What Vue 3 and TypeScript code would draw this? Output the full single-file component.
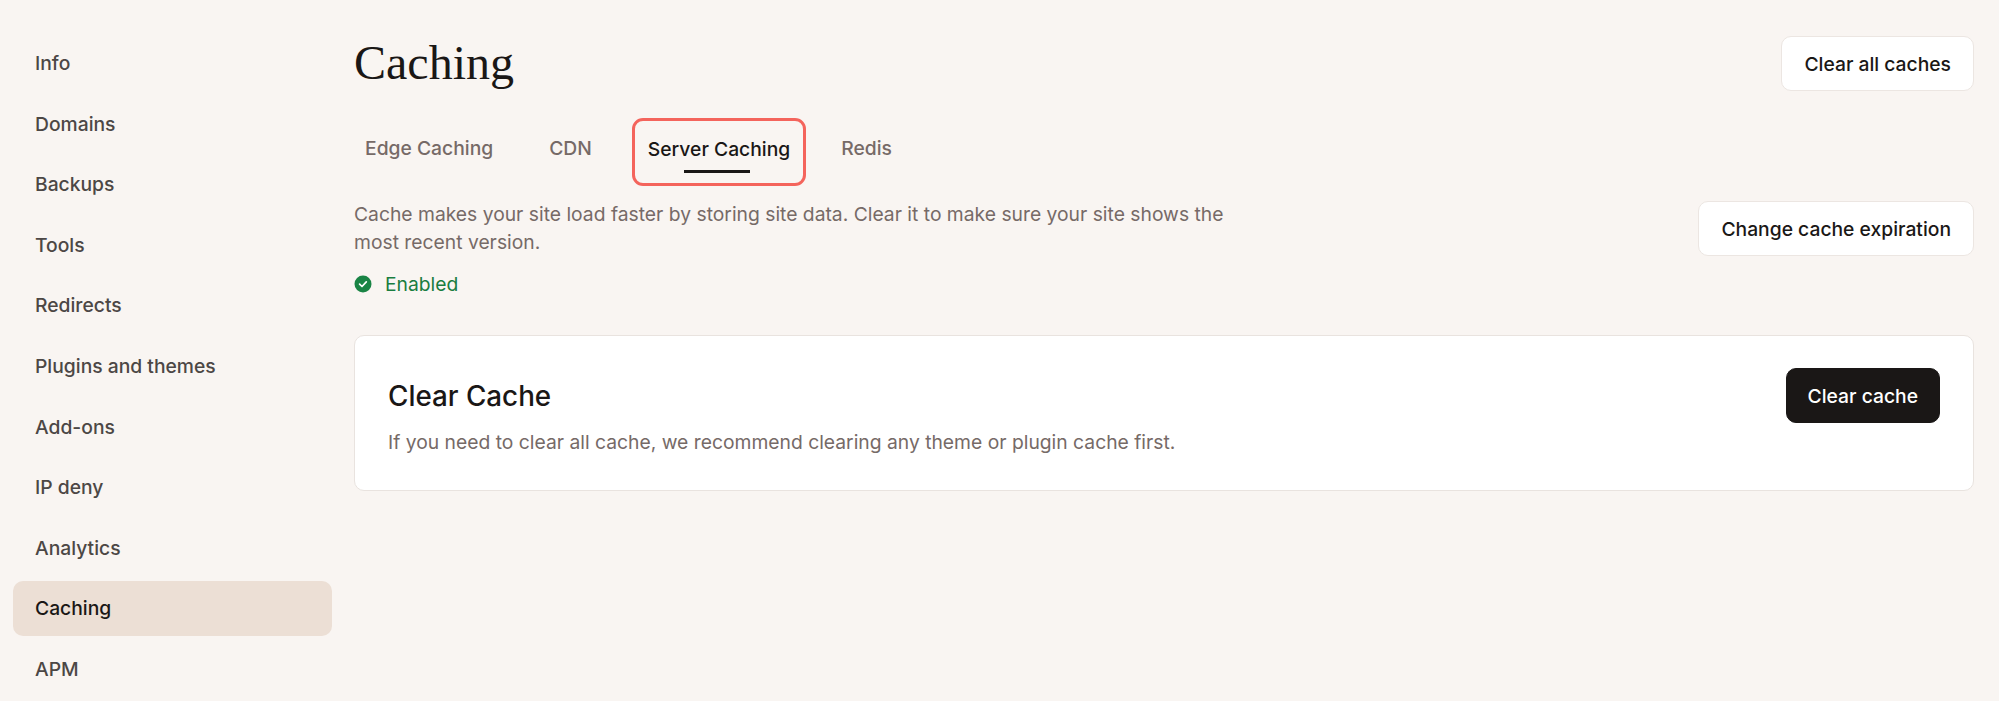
<template>
  <div class="page">
    <nav class="side">
      <a
        v-for="item in navItems"
        :key="item"
        class="side-item"
        :class="{ active: item === 'Caching' }"
      >{{ item }}</a>
    </nav>

    <main class="main">
      <header class="head">
        <h1 class="title">Caching</h1>
        <button class="btn">Clear all caches</button>
      </header>

      <div class="tabs">
        <div
          v-for="tab in tabs"
          :key="tab"
          class="tab"
          :class="{ current: tab === 'Server Caching' }"
        >{{ tab }}</div>
      </div>

      <section class="intro">
        <div>
          <p class="muted intro-text">
            Cache makes your site load faster by storing site data. Clear it to make sure your site shows the most recent version.
          </p>
          <div class="status">
            <svg width="18" height="18" viewBox="0 0 18 18">
              <circle cx="9" cy="9" r="8.5" fill="#1a8445" />
              <path d="M5.6 9.2l2.4 2.3 4.3-4.6" fill="none" stroke="#fff" stroke-width="1.7" stroke-linecap="round" stroke-linejoin="round" />
            </svg>
            <span>Enabled</span>
          </div>
        </div>
        <button class="btn">Change cache expiration</button>
      </section>

      <section class="card">
        <div class="card-body">
          <h2 class="card-title">Clear Cache</h2>
          <p class="muted">If you need to clear all cache, we recommend clearing any theme or plugin cache first.</p>
        </div>
        <button class="btn dark">Clear cache</button>
      </section>
    </main>
  </div>
</template>

<script setup lang="ts">
const navItems: string[] = [
  'Info',
  'Domains',
  'Backups',
  'Tools',
  'Redirects',
  'Plugins and themes',
  'Add-ons',
  'IP deny',
  'Analytics',
  'Caching',
  'APM'
]

const tabs: string[] = ['Edge Caching', 'CDN', 'Server Caching', 'Redis']
</script>

<style>
html, body {
  background: #f9f5f2;
  overflow: hidden;
}
</style>

<style scoped>
.page {
  display: flex;
  height: 701px;
  overflow: hidden;
  background: #f9f5f2;
  font-family: Inter, "Liberation Sans", sans-serif;
  color: #1a1716;
  font-size: 19.3px;
}

.side {
  width: 319px;
  margin-left: 13px;
  padding-top: 36px;
  flex-shrink: 0;
  display: flex;
  flex-direction: column;
  gap: 5.6px;
}

.side-item {
  height: 55px;
  flex-shrink: 0;
  padding: 0 0 1px 22px;
  box-sizing: border-box;
  border-radius: 10px;
  display: flex;
  align-items: center;
  font-weight: 500;
  color: #4c4745;
}

.side-item.active {
  background: #ecdfd5;
  color: #1a1716;
}

.main {
  flex: 1;
  margin-left: 22px;
  margin-right: 25px;
  padding-top: 36px;
  min-width: 0;
}

.head {
  display: flex;
  justify-content: space-between;
  align-items: flex-start;
  height: 82px;
}

.title {
  margin: 0;
  font-family: "Liberation Serif", serif;
  font-weight: 400;
  font-size: 48px;
  line-height: 54px;
}

.btn {
  height: 55px;
  padding: 0 22px;
  border: 1px solid #ece6e2;
  border-radius: 10px;
  background: #fff;
  font: 500 19.3px Inter, "Liberation Sans", sans-serif;
  color: #1a1716;
}

.btn.dark {
  padding: 0 21px;
  background: #1a1716;
  border-color: #1a1716;
  color: #fff;
}

.tabs {
  display: flex;
  align-items: stretch;
  height: 68px;
  gap: 24px;
  margin-left: -5px;
}

.tab {
  padding: 0 16px 9px;
  display: flex;
  align-items: center;
  font-weight: 500;
  color: #766a67;
  position: relative;
}

.tab.current {
  color: #1a1716;
  padding: 0 13px 6px;
  margin-right: -5px;
  border: 3px solid #f4645c;
  border-radius: 11px;
}

.tab.current::after {
  content: "";
  position: absolute;
  left: 50%;
  bottom: 10px;
  width: 66px;
  height: 3px;
  margin-left: -35px;
  background: #1a1716;
}

.intro {
  display: flex;
  justify-content: space-between;
  align-items: flex-start;
  margin-top: 15px;
}

.muted {
  margin: 0;
  color: #766a67;
  line-height: 27.7px;
}

.intro-text {
  width: 900px;
}

.status {
  display: flex;
  align-items: center;
  gap: 13px;
  margin-top: 13.6px;
  color: #1a7d40;
  line-height: 28px;
}

.card {
  margin-top: 37px;
  height: 156px;
  box-sizing: border-box;
  padding: 32px 33px;
  background: #fff;
  border: 1px solid #e9e3df;
  border-radius: 10px;
  display: flex;
  justify-content: space-between;
  align-items: flex-start;
}

.card-body {
  padding-top: 12px;
}

.card-title {
  margin: 0 0 17px;
  font-size: 27.8px;
  line-height: 32px;
  font-weight: 500;
}
</style>
